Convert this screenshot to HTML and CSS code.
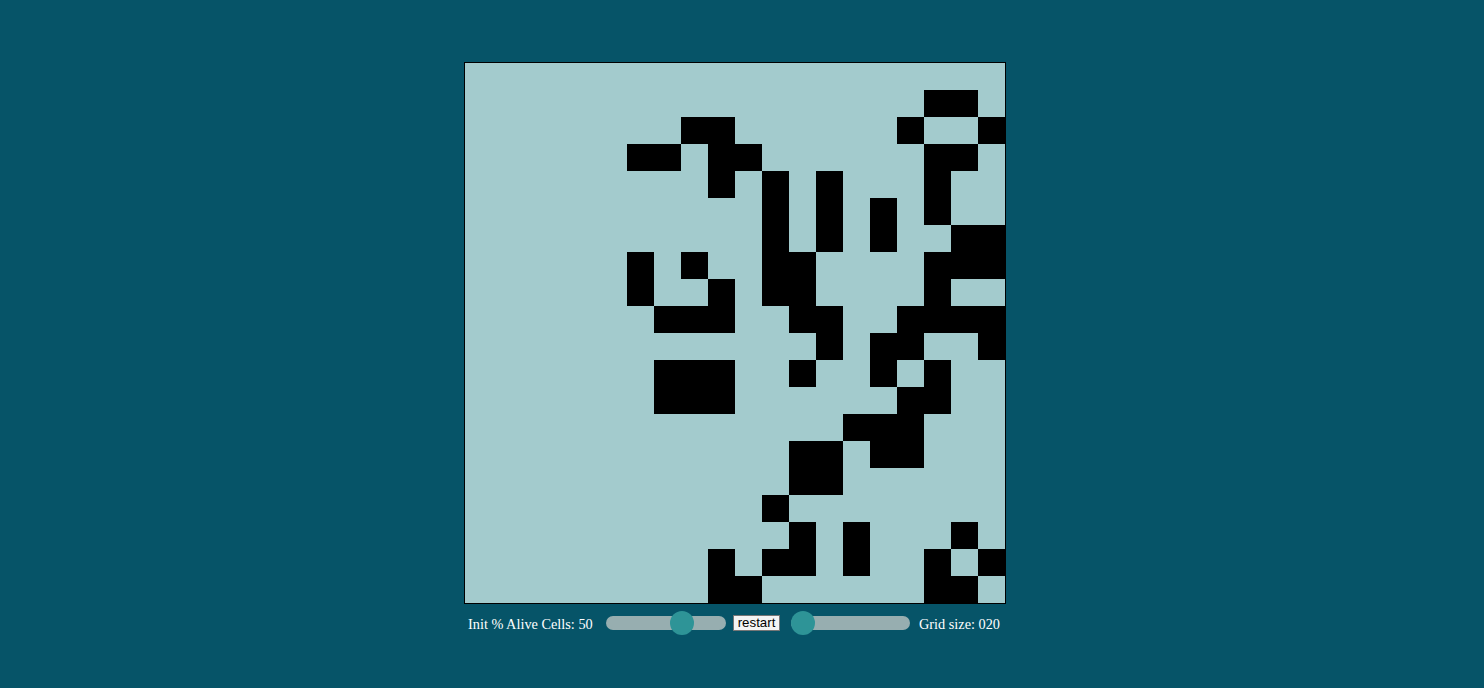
FILE: index.html
```html
<!DOCTYPE html>
<html>
<head>
<meta charset="utf-8">
<title>Game of Life</title>
<link rel="stylesheet" href="styles.css">
</head>
<body>
<div class="page">
  <div class="board">
    <div class="row"><i class="c"></i><i class="c"></i><i class="c"></i><i class="c"></i><i class="c"></i><i class="c"></i><i class="c"></i><i class="c"></i><i class="c"></i><i class="c"></i><i class="c"></i><i class="c"></i><i class="c"></i><i class="c"></i><i class="c"></i><i class="c"></i><i class="c"></i><i class="c"></i><i class="c"></i><i class="c"></i></div>
    <div class="row"><i class="c"></i><i class="c"></i><i class="c"></i><i class="c"></i><i class="c"></i><i class="c"></i><i class="c"></i><i class="c"></i><i class="c"></i><i class="c"></i><i class="c"></i><i class="c"></i><i class="c"></i><i class="c"></i><i class="c"></i><i class="c"></i><i class="c"></i><i class="c on"></i><i class="c on"></i><i class="c"></i></div>
    <div class="row"><i class="c"></i><i class="c"></i><i class="c"></i><i class="c"></i><i class="c"></i><i class="c"></i><i class="c"></i><i class="c"></i><i class="c on"></i><i class="c on"></i><i class="c"></i><i class="c"></i><i class="c"></i><i class="c"></i><i class="c"></i><i class="c"></i><i class="c on"></i><i class="c"></i><i class="c"></i><i class="c on"></i></div>
    <div class="row"><i class="c"></i><i class="c"></i><i class="c"></i><i class="c"></i><i class="c"></i><i class="c"></i><i class="c on"></i><i class="c on"></i><i class="c"></i><i class="c on"></i><i class="c on"></i><i class="c"></i><i class="c"></i><i class="c"></i><i class="c"></i><i class="c"></i><i class="c"></i><i class="c on"></i><i class="c on"></i><i class="c"></i></div>
    <div class="row"><i class="c"></i><i class="c"></i><i class="c"></i><i class="c"></i><i class="c"></i><i class="c"></i><i class="c"></i><i class="c"></i><i class="c"></i><i class="c on"></i><i class="c"></i><i class="c on"></i><i class="c"></i><i class="c on"></i><i class="c"></i><i class="c"></i><i class="c"></i><i class="c on"></i><i class="c"></i><i class="c"></i></div>
    <div class="row"><i class="c"></i><i class="c"></i><i class="c"></i><i class="c"></i><i class="c"></i><i class="c"></i><i class="c"></i><i class="c"></i><i class="c"></i><i class="c"></i><i class="c"></i><i class="c on"></i><i class="c"></i><i class="c on"></i><i class="c"></i><i class="c on"></i><i class="c"></i><i class="c on"></i><i class="c"></i><i class="c"></i></div>
    <div class="row"><i class="c"></i><i class="c"></i><i class="c"></i><i class="c"></i><i class="c"></i><i class="c"></i><i class="c"></i><i class="c"></i><i class="c"></i><i class="c"></i><i class="c"></i><i class="c on"></i><i class="c"></i><i class="c on"></i><i class="c"></i><i class="c on"></i><i class="c"></i><i class="c"></i><i class="c on"></i><i class="c on"></i></div>
    <div class="row"><i class="c"></i><i class="c"></i><i class="c"></i><i class="c"></i><i class="c"></i><i class="c"></i><i class="c on"></i><i class="c"></i><i class="c on"></i><i class="c"></i><i class="c"></i><i class="c on"></i><i class="c on"></i><i class="c"></i><i class="c"></i><i class="c"></i><i class="c"></i><i class="c on"></i><i class="c on"></i><i class="c on"></i></div>
    <div class="row"><i class="c"></i><i class="c"></i><i class="c"></i><i class="c"></i><i class="c"></i><i class="c"></i><i class="c on"></i><i class="c"></i><i class="c"></i><i class="c on"></i><i class="c"></i><i class="c on"></i><i class="c on"></i><i class="c"></i><i class="c"></i><i class="c"></i><i class="c"></i><i class="c on"></i><i class="c"></i><i class="c"></i></div>
    <div class="row"><i class="c"></i><i class="c"></i><i class="c"></i><i class="c"></i><i class="c"></i><i class="c"></i><i class="c"></i><i class="c on"></i><i class="c on"></i><i class="c on"></i><i class="c"></i><i class="c"></i><i class="c on"></i><i class="c on"></i><i class="c"></i><i class="c"></i><i class="c on"></i><i class="c on"></i><i class="c on"></i><i class="c on"></i></div>
    <div class="row"><i class="c"></i><i class="c"></i><i class="c"></i><i class="c"></i><i class="c"></i><i class="c"></i><i class="c"></i><i class="c"></i><i class="c"></i><i class="c"></i><i class="c"></i><i class="c"></i><i class="c"></i><i class="c on"></i><i class="c"></i><i class="c on"></i><i class="c on"></i><i class="c"></i><i class="c"></i><i class="c on"></i></div>
    <div class="row"><i class="c"></i><i class="c"></i><i class="c"></i><i class="c"></i><i class="c"></i><i class="c"></i><i class="c"></i><i class="c on"></i><i class="c on"></i><i class="c on"></i><i class="c"></i><i class="c"></i><i class="c on"></i><i class="c"></i><i class="c"></i><i class="c on"></i><i class="c"></i><i class="c on"></i><i class="c"></i><i class="c"></i></div>
    <div class="row"><i class="c"></i><i class="c"></i><i class="c"></i><i class="c"></i><i class="c"></i><i class="c"></i><i class="c"></i><i class="c on"></i><i class="c on"></i><i class="c on"></i><i class="c"></i><i class="c"></i><i class="c"></i><i class="c"></i><i class="c"></i><i class="c"></i><i class="c on"></i><i class="c on"></i><i class="c"></i><i class="c"></i></div>
    <div class="row"><i class="c"></i><i class="c"></i><i class="c"></i><i class="c"></i><i class="c"></i><i class="c"></i><i class="c"></i><i class="c"></i><i class="c"></i><i class="c"></i><i class="c"></i><i class="c"></i><i class="c"></i><i class="c"></i><i class="c on"></i><i class="c on"></i><i class="c on"></i><i class="c"></i><i class="c"></i><i class="c"></i></div>
    <div class="row"><i class="c"></i><i class="c"></i><i class="c"></i><i class="c"></i><i class="c"></i><i class="c"></i><i class="c"></i><i class="c"></i><i class="c"></i><i class="c"></i><i class="c"></i><i class="c"></i><i class="c on"></i><i class="c on"></i><i class="c"></i><i class="c on"></i><i class="c on"></i><i class="c"></i><i class="c"></i><i class="c"></i></div>
    <div class="row"><i class="c"></i><i class="c"></i><i class="c"></i><i class="c"></i><i class="c"></i><i class="c"></i><i class="c"></i><i class="c"></i><i class="c"></i><i class="c"></i><i class="c"></i><i class="c"></i><i class="c on"></i><i class="c on"></i><i class="c"></i><i class="c"></i><i class="c"></i><i class="c"></i><i class="c"></i><i class="c"></i></div>
    <div class="row"><i class="c"></i><i class="c"></i><i class="c"></i><i class="c"></i><i class="c"></i><i class="c"></i><i class="c"></i><i class="c"></i><i class="c"></i><i class="c"></i><i class="c"></i><i class="c on"></i><i class="c"></i><i class="c"></i><i class="c"></i><i class="c"></i><i class="c"></i><i class="c"></i><i class="c"></i><i class="c"></i></div>
    <div class="row"><i class="c"></i><i class="c"></i><i class="c"></i><i class="c"></i><i class="c"></i><i class="c"></i><i class="c"></i><i class="c"></i><i class="c"></i><i class="c"></i><i class="c"></i><i class="c"></i><i class="c on"></i><i class="c"></i><i class="c on"></i><i class="c"></i><i class="c"></i><i class="c"></i><i class="c on"></i><i class="c"></i></div>
    <div class="row"><i class="c"></i><i class="c"></i><i class="c"></i><i class="c"></i><i class="c"></i><i class="c"></i><i class="c"></i><i class="c"></i><i class="c"></i><i class="c on"></i><i class="c"></i><i class="c on"></i><i class="c on"></i><i class="c"></i><i class="c on"></i><i class="c"></i><i class="c"></i><i class="c on"></i><i class="c"></i><i class="c on"></i></div>
    <div class="row"><i class="c"></i><i class="c"></i><i class="c"></i><i class="c"></i><i class="c"></i><i class="c"></i><i class="c"></i><i class="c"></i><i class="c"></i><i class="c on"></i><i class="c on"></i><i class="c"></i><i class="c"></i><i class="c"></i><i class="c"></i><i class="c"></i><i class="c"></i><i class="c on"></i><i class="c on"></i><i class="c"></i></div>
  </div>
  <div class="controls">
    <span class="label label-alive">Init % Alive Cells: 50</span>
    <input class="slider slider-alive" type="range" min="0" max="75" value="50">
    <button class="restart" type="button">restart</button>
    <input class="slider slider-size" type="range" min="20" max="100" value="20">
    <span class="label label-size">Grid size: 020</span>
  </div>
</div>
</body>
</html>
```

FILE: styles.css
```css
html, body {
  margin: 0;
  padding: 0;
}

body {
  background: #065468;
  height: 688px;
  overflow: hidden;
  font-family: "Liberation Serif", "Times New Roman", serif;
}

.page {
  display: flex;
  flex-direction: column;
  align-items: flex-start;
  padding: 62px 0 0 464px;
}

.board {
  display: flex;
  flex-direction: column;
  border: 1px solid #000;
  background: #a3cbcd;
}

.row {
  display: flex;
}

.c {
  display: block;
  width: 27px;
  height: 27px;
  background: #a3cbcd;
}

.c.on {
  background: #000;
}

.controls {
  display: flex;
  align-items: center;
  height: 24px;
  margin-top: 7px;
  padding-left: 4px;
}

.label {
  color: #fff;
  font-size: 14.3px;
  line-height: 16px;
  padding-top: 2px;
  white-space: nowrap;
}

.label-alive {
  width: 124px;
  margin-right: 14px;
}

.slider {
  -webkit-appearance: none;
  appearance: none;
  margin: 0;
  height: 14px;
  border-radius: 7px;
  background: #97aeb0;
  outline: none;
}

.slider::-webkit-slider-runnable-track {
  height: 14px;
  border-radius: 7px;
  background: transparent;
}

.slider::-webkit-slider-thumb {
  -webkit-appearance: none;
  appearance: none;
  width: 24px;
  height: 24px;
  margin-top: -5px;
  border-radius: 50%;
  background: #2e9497;
  border: none;
}

.slider-alive {
  width: 120px;
}

.slider-size {
  width: 119px;
  margin-right: 9px;
}

.restart {
  margin: 0 11px 0 7px;
  width: 47px;
  height: 16px;
  padding: 0;
  border: 1px solid #767676;
  border-radius: 0;
  background: #f4f4f4;
  color: #000;
  font-family: "Liberation Sans", Arial, sans-serif;
  font-size: 13.3px;
  line-height: 14px;
}
```
